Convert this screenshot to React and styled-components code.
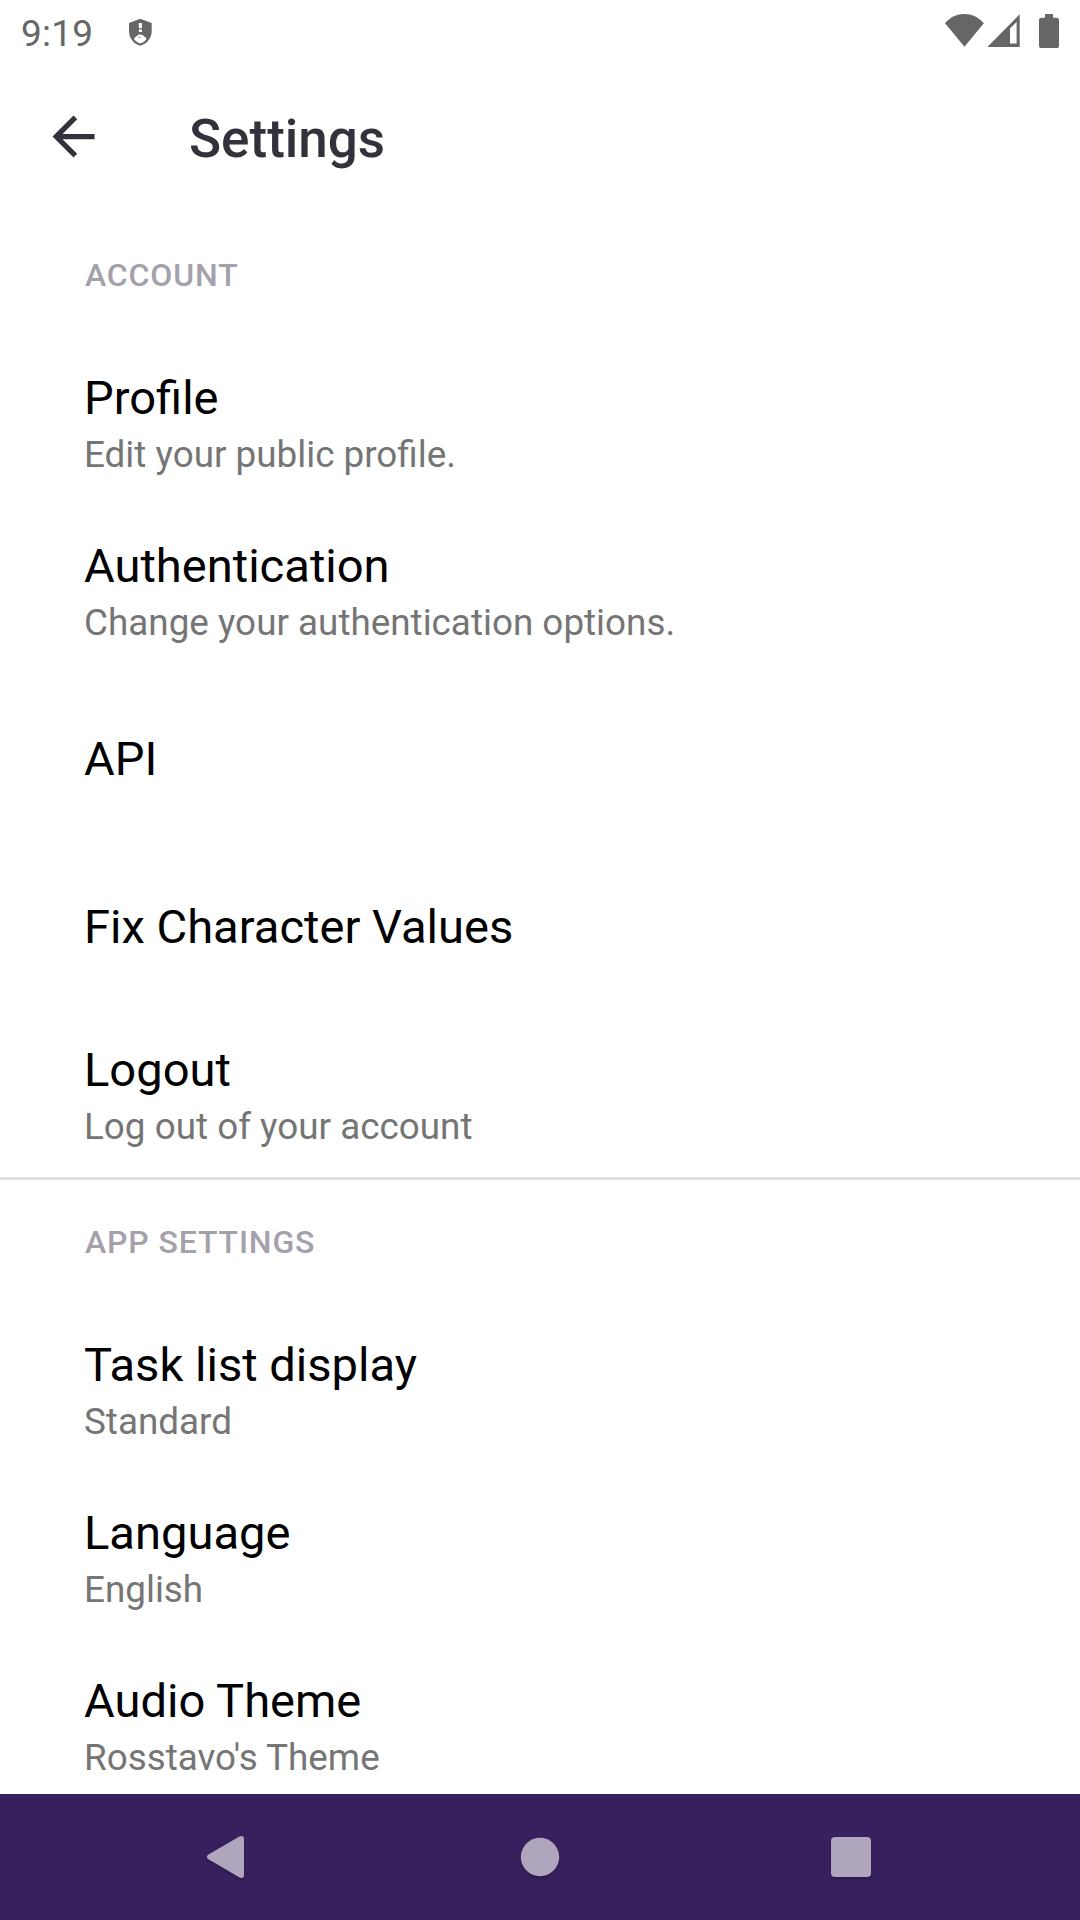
import React from "react";
import styled, { createGlobalStyle } from "styled-components";

const GlobalStyle = createGlobalStyle`
  * { box-sizing: border-box; }
  body { margin: 0; background: #ffffff; }
`;

const Screen = styled.div`
  display: flex;
  flex-direction: column;
  width: 1080px;
  height: 1920px;
  overflow: hidden;
  background: #ffffff;
  font-family: Roboto, "Liberation Sans", sans-serif;
`;

const StatusBar = styled.header`
  display: flex;
  flex: none;
  align-items: flex-start;
  height: 63px;
  padding: 12px 20px 0 21px;
  color: #666666;
`;

const Clock = styled.time`
  width: 106px;
  font-size: 37px;
  line-height: 43px;
  letter-spacing: 0.2px;
`;

const Icon = styled.svg`
  display: block;
  flex: none;
  fill: currentColor;
`;

const ShieldIcon = styled(Icon)`
  margin-top: 6px;
`;

const StatusIcons = styled(Icon)`
  margin-left: auto;
`;

const Toolbar = styled.div`
  display: flex;
  flex: none;
  align-items: center;
  height: 147px;
  padding-left: 42px;
  color: #34313a;
`;

const BackButton = styled.button`
  display: flex;
  width: 147px;
  padding: 0;
  border: 0;
  background: none;
  color: inherit;
`;

const Title = styled.h1`
  margin: 0;
  padding-top: 5px;
  font-size: 53px;
  line-height: 62px;
  font-weight: 500;
`;

const Content = styled.main`
  flex: 1;
  min-height: 0;
  overflow: hidden;
  padding-top: 1px;
`;

const Section = styled.section`
  padding-top: ${(p) => (p.$divided ? "1px" : "0")};
  box-shadow: ${(p) => (p.$divided ? "inset 0 3px 0 #e0e0e0" : "none")};
`;

const SectionTitle = styled.h2`
  margin: 0;
  height: 126px;
  padding: 45px 85px 0;
  font-size: 32px;
  line-height: 38px;
  font-weight: 500;
  letter-spacing: 0.86px;
  color: #a5a1ac;
`;

const Row = styled.div`
  display: flex;
  flex-direction: column;
  justify-content: center;
  height: 168px;
  padding: 3px 84px 0;
`;

const RowTitle = styled.div`
  font-size: 47.1px;
  line-height: 55px;
  color: #000000;
`;

const Summary = styled.div`
  height: 50px;
  padding-top: 8px;
  font-size: 36.85px;
  line-height: 43px;
  color: #757575;
`;

const NavBar = styled.nav`
  display: flex;
  flex: none;
  align-items: center;
  justify-content: space-between;
  height: 126px;
  padding: 0 207px 0 206px;
  background: #36205d;
  color: #afa6be;
`;

const NavIcon = styled(Icon)`
  filter: drop-shadow(0 2px 1px rgba(0, 0, 0, 0.2));
`;

const sections = [
  {
    name: "ACCOUNT",
    rows: [
      ["Profile", "Edit your public profile."],
      ["Authentication", "Change your authentication options."],
      ["API"],
      ["Fix Character Values"],
      ["Logout", "Log out of your account"],
    ],
  },
  {
    name: "APP SETTINGS",
    rows: [
      ["Task list display", "Standard"],
      ["Language", "English"],
      ["Audio Theme", "Rosstavo's Theme"],
    ],
  },
];

export default function App() {
  return (
    <Screen>
      <GlobalStyle />
      <StatusBar>
        <Clock>9:19</Clock>
        <ShieldIcon width="26" height="28" viewBox="0 0 26 28">
          <path
            fillRule="evenodd"
            d="M13.3 .7 24.7 5V13C24.7 20 20 26 13.3 27.7 6.5 26 2 20 2 13V5ZM11.8 5V10.2H14.9V5ZM11.8 11.4V14H14.9V11.4ZM7 21C8.5 23.3 10.5 24.6 13.3 25.6 16 24.6 18 23.3 19.5 21L18.5 19.3 17 18.5C15.6 16.2 11.5 15.8 10 18L8 19.2Z"
          />
          <circle cx="12.3" cy="19.4" r=".7" />
        </ShieldIcon>
        <StatusIcons width="116" height="36" viewBox="0 0 116 36">
          <path d="M1 11.3C11.5-1 29-1 39.8 11.3L20.5 34.7Z" />
          <path fillRule="evenodd" d="M43.4 35 75.7 2.3V35ZM66 16.5V31.5H72.6V9.9Z" />
          <path d="M101 2H109V5.7H112.5Q115 5.7 115 8.2V33.4Q115 36 112.5 36H97.5Q95 36 95 33.4V8.2Q95 5.7 97.5 5.7H101Z" />
        </StatusIcons>
      </StatusBar>
      <Toolbar>
        <BackButton aria-label="Back">
          <Icon width="63" height="63" viewBox="0 0 24 24">
            <path d="M20 11H7.83l5.59-5.59L12 4l-8 8 8 8 1.41-1.41L7.83 13H20v-2z" />
          </Icon>
        </BackButton>
        <Title>Settings</Title>
      </Toolbar>
      <Content>
        {sections.map((section, i) => (
          <Section key={section.name} $divided={i > 0}>
            <SectionTitle>{section.name}</SectionTitle>
            {section.rows.map(([title, summary]) => (
              <Row key={title}>
                <RowTitle>{title}</RowTitle>
                {summary && <Summary>{summary}</Summary>}
              </Row>
            ))}
          </Section>
        ))}
      </Content>
      <NavBar>
        <NavIcon width="45" height="44" viewBox="0 0 45 44">
          <path d="M2 19.8 33.5 1.4Q38 0 38 4V40Q38 44 33.5 42.5L2 24Q-.2 22 2 19.8Z" />
        </NavIcon>
        <NavIcon width="40" height="40" viewBox="0 0 40 40">
          <circle cx="20" cy="20" r="19.2" />
        </NavIcon>
        <NavIcon width="44" height="44" viewBox="0 0 44 44">
          <rect x="2" y="2" width="40" height="40" rx="4" />
        </NavIcon>
      </NavBar>
    </Screen>
  );
}
